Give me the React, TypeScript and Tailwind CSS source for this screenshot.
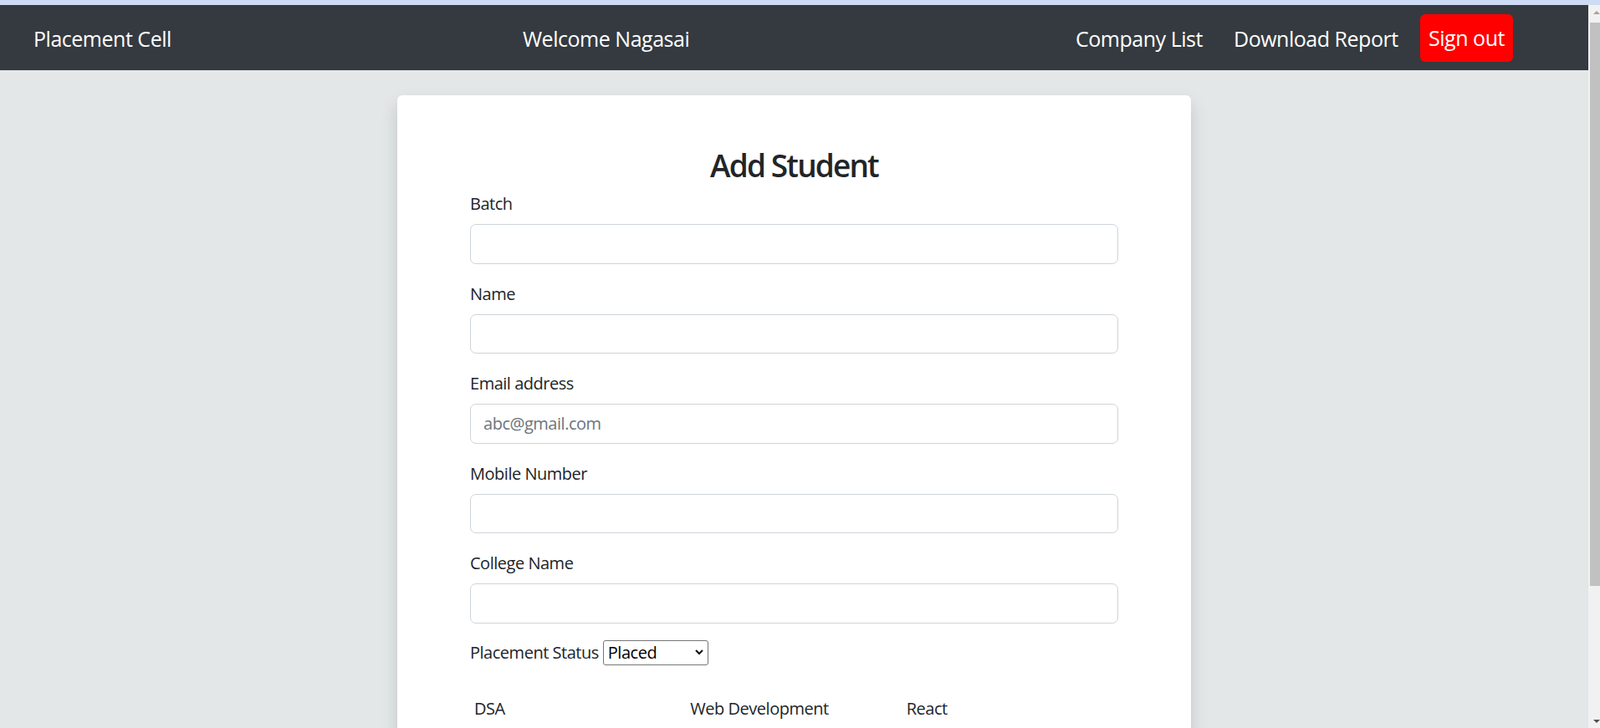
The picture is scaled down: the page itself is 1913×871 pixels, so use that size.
import { ChangeEvent, useState } from "react";

const fields = [
  { id: "batch", label: "Batch", placeholder: "" },
  { id: "name", label: "Name", placeholder: "" },
  { id: "email", label: "Email address", placeholder: "abc@gmail.com" },
  { id: "mobile", label: "Mobile Number", placeholder: "" },
  { id: "college", label: "College Name", placeholder: "" },
];

const courses = ["DSA", "Web Development", "React"];

function Navbar() {
  return (
    <nav className="flex h-[78px] shrink-0 items-center bg-[#343a40] pl-[40px] pr-[90px] text-[25px] leading-[30px] text-white">
      <a className="w-[585px] pt-[1px]">Placement Cell</a>
      <span className="pt-[1px]">Welcome Nagasai</span>
      <div className="ml-auto flex items-center">
        <a className="w-[189px] pt-[1px]">Company List</a>
        <a className="w-[223px] pt-[1px]">Download Report</a>
        <button className="flex h-[57px] w-[111px] items-center justify-center rounded-[6px] bg-[#ff0000] text-white">
          Sign out
        </button>
      </div>
    </nav>
  );
}

function Scrollbar() {
  return (
    <div className="flex w-[14px] shrink-0 flex-col bg-[#f1f1f1]">
      <div className="flex h-[17px] items-center pl-[6px]">
        <div className="h-0 w-0 border-x-[4px] border-b-[4px] border-x-transparent border-b-[#a3a3a3]" />
      </div>
      <div className="mt-[4px] ml-[2px] h-[674px] bg-[#c1c1c1]" />
      <div className="mt-auto flex h-[17px] items-center pl-[6px]">
        <div className="h-0 w-0 border-x-[4px] border-t-[4px] border-x-transparent border-t-[#505050]" />
      </div>
    </div>
  );
}

export default function App() {
  const [status, setStatus] = useState("Placed");

  return (
    <div className="flex h-[871px] flex-col overflow-hidden font-['Open_Sans',sans-serif] tracking-[-0.03em] text-[#212529]">
      <div className="h-[6px] shrink-0 bg-[#cddcf4]" />
      <div className="flex min-h-0 flex-1">
        <div className="flex min-w-0 flex-1 flex-col overflow-hidden bg-[#e3e7e8]">
          <Navbar />
          <main className="pt-[30px]">
            <form className="mx-auto w-[949px] rounded-[6px] bg-white px-[87px] pt-[60px] pb-[40px] shadow-[0_10px_20px_rgba(0,0,0,0.15)]">
              <h2 className="mb-[6px] text-center text-[37px] font-semibold leading-[48px] tracking-[-0.05em]">Add Student</h2>
              {fields.map((f) => (
                <div key={f.id} className="mb-[20px]">
                  <label htmlFor={f.id} className="mb-[10px] block pt-[1px] text-[20px] leading-[29px]">
                    {f.label}
                  </label>
                  <input
                    id={f.id}
                    placeholder={f.placeholder}
                    className="block h-[47.5px] w-full rounded-[7px] border border-[#ced4da] px-[15px] text-[20px] placeholder:text-[#6c757d] focus:outline-none"
                  />
                </div>
              ))}
              <div className="mt-[2px] flex h-[30px] items-center text-[20px]">
                <label htmlFor="status" className="mr-[5px]">Placement Status</label>
                <div className="relative">
                  <select
                    id="status"
                    value={status}
                    onChange={(e: ChangeEvent<HTMLSelectElement>) => setStatus(e.target.value)}
                    className="h-[30px] w-[126px] appearance-none rounded-[3px] border border-[#767676] bg-white pl-[5px] text-[20px] leading-[28px] text-black"
                  >
                    <option>Placed</option>
                    <option>Not Placed</option>
                  </select>
                  <svg className="pointer-events-none absolute top-[11px] left-[110px]" width="10" height="7" viewBox="0 0 10 7">
                    <path d="M1 1 L5 5 L9 1" fill="none" stroke="#111" strokeWidth="2" />
                  </svg>
                </div>
              </div>
              <div className="mt-[37px] grid grid-cols-3 text-[20px] leading-[30px]">
                {courses.map((c) => (
                  <div key={c} className="px-[5px]">{c}</div>
                ))}
              </div>
              <div className="mt-[10px] grid grid-cols-3 gap-[10px]">
                {courses.map((c) => (
                  <input key={c} type="number" className="h-[47.5px] rounded-[7px] border border-[#ced4da] px-[15px] text-[20px]" />
                ))}
              </div>
            </form>
          </main>
        </div>
        <Scrollbar />
      </div>
    </div>
  );
}
